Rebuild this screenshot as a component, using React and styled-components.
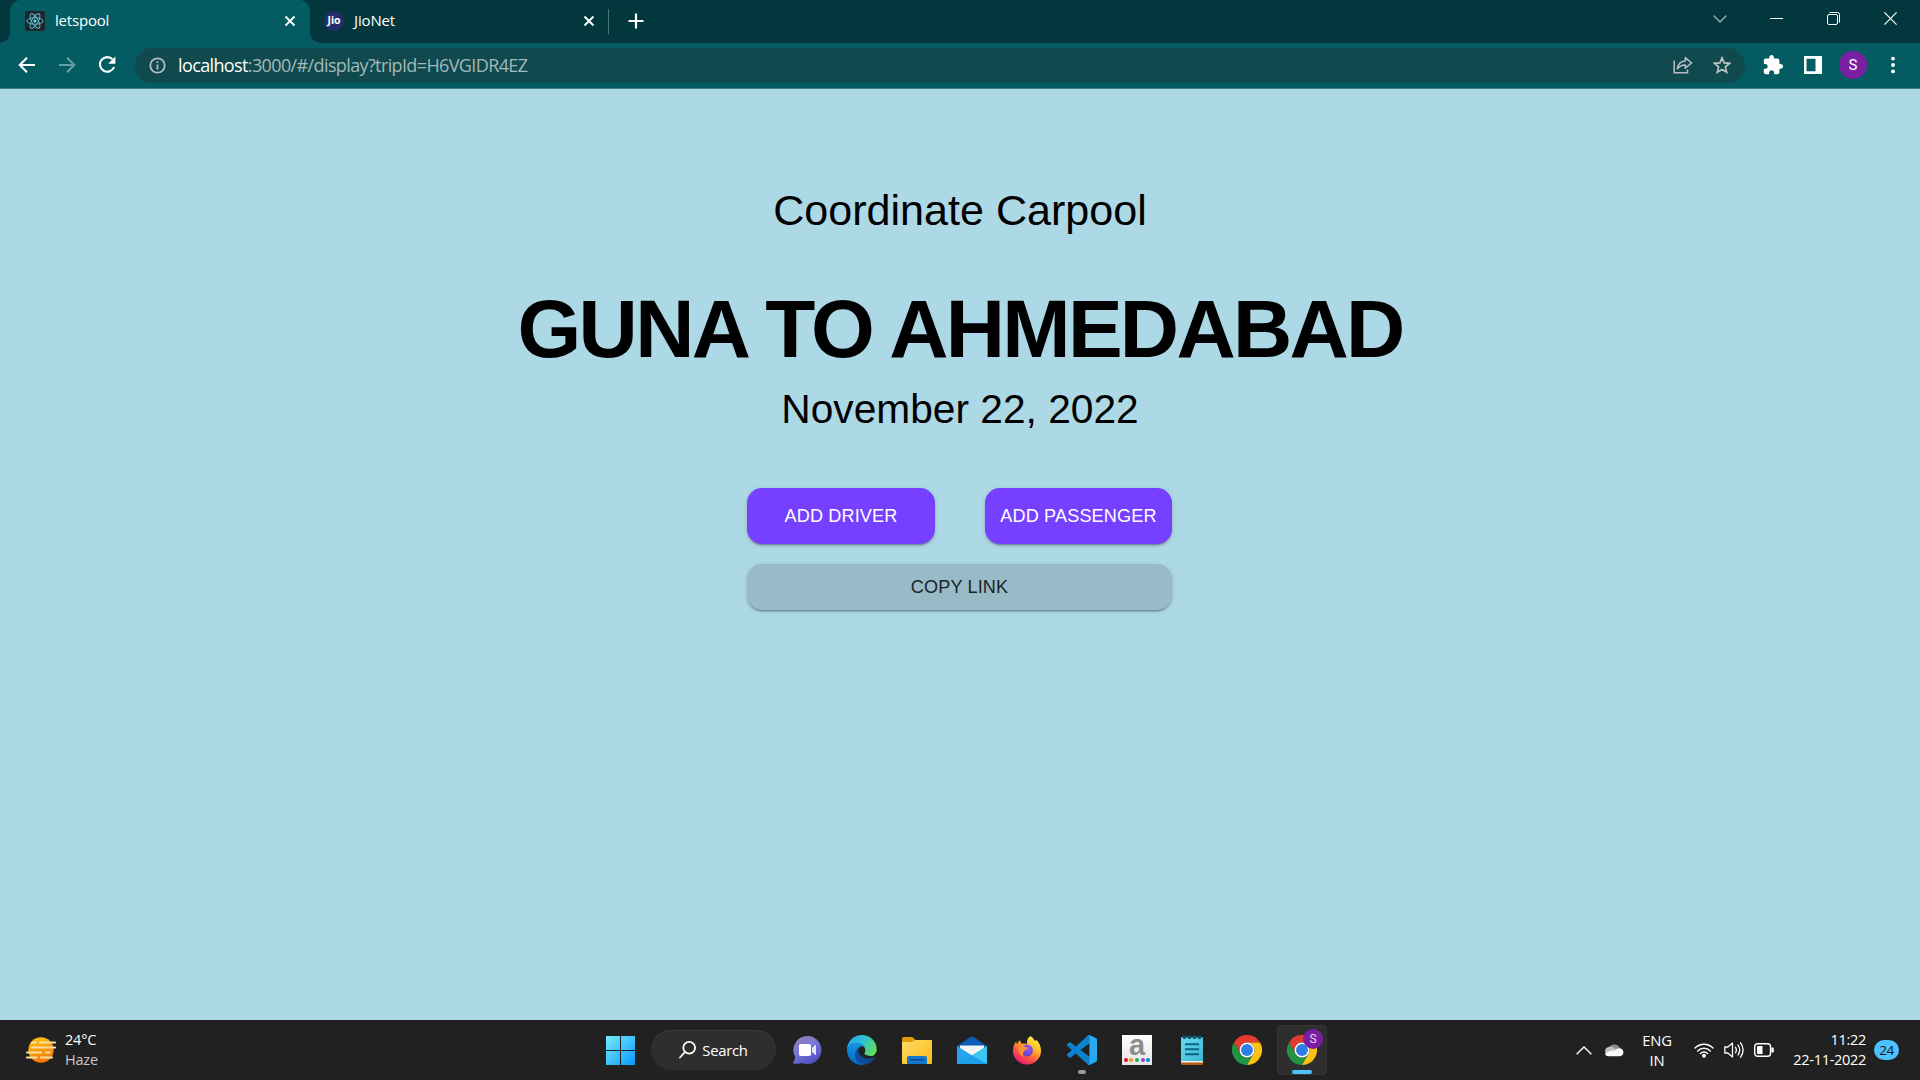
import React from "react";
import styled, { createGlobalStyle, css } from "styled-components";

const GlobalStyle = createGlobalStyle`
  * { box-sizing: border-box; }
  body { margin: 0; background: #add8e6; overflow: hidden; }
  button { border: 0; padding: 0; margin: 0; background: none; font: inherit; color: inherit; }
  svg { display: block; flex: none; }
`;

const uiFont = css`font-family: "Open Sans", "Noto Sans", sans-serif;`;

const Screen = styled.div`
  display: flex;
  flex-direction: column;
  width: 1920px;
  height: 1080px;
  overflow: hidden;
  background: #add8e6;
`;

/* ---------- browser ---------- */

const TabStrip = styled.header`
  ${uiFont}
  display: flex;
  flex: none;
  height: 43px;
  padding-left: 10px;
  background: #02383d;
  color: #fff;
`;

const Tab = styled.div`
  position: relative;
  display: flex;
  align-items: center;
  width: ${(p) => p.$width}px;
  padding: 0 14px 2px ${(p) => (p.$active ? 15 : 14)}px;
  font-size: 15px;
  letter-spacing: ${(p) => p.$track || 0}px;
  border-radius: 10px 10px 0 0;
  background: ${(p) => (p.$active ? "#045c62" : "transparent")};
  ${(p) =>
    p.$active &&
    css`
      &::before, &::after {
        content: "";
        position: absolute;
        bottom: 0;
        width: 10px;
        height: 10px;
      }
      &::before { left: -10px; background: radial-gradient(circle at 0 0, transparent 9.5px, #045c62 10px); }
      &::after { right: -10px; background: radial-gradient(circle at 100% 0, transparent 9.5px, #045c62 10px); }
    `}
`;

const TabTitle = styled.span`
  flex: 1;
  margin-left: 10px;
  line-height: 39px;
`;

const TabDivider = styled.i`
  width: 1px;
  height: 25px;
  margin: 9px 0 0 -1px;
  background: #4d7478;
`;

const NewTab = styled.button`
  display: grid;
  place-items: center;
  width: 54px;
  height: 42px;
`;

const WindowControls = styled.div`
  display: flex;
  height: 37px;
  margin-left: auto;
  padding-right: 1px;
`;

const WindowButton = styled.button`
  display: grid;
  place-items: center;
  width: 57px;
`;

const Toolbar = styled.div`
  ${uiFont}
  display: flex;
  flex: none;
  align-items: center;
  height: 46px;
  padding: 0 7px 1px 7px;
  background: #045c62;
  border-bottom: 1px solid #418185;
  color: #fff;
`;

const ToolButton = styled.button`
  display: grid;
  place-items: center;
  width: ${(p) => p.$w || 40}px;
  height: 40px;
`;

const AddressBar = styled.div`
  display: flex;
  flex: 1;
  align-items: center;
  height: 35px;
  margin: 0 8px 0 8px;
  padding: 0 3px 0 14px;
  border-radius: 18px;
  background: #10494e;
  color: #bcbfc1;
`;

const Url = styled.span`
  flex: 1;
  margin-left: 12px;
  font-size: 18px;
  line-height: 24px;
  letter-spacing: -0.62px;
  color: #a3b9bb;
  b { font-weight: 400; color: #fff; }
`;

const Avatar = styled.span`
  display: grid;
  place-items: center;
  width: 28px;
  height: 28px;
  border-radius: 50%;
  background: #7b1fa2;
  font: 15px/28px Roboto, sans-serif;
`;

/* ---------- page ---------- */

const Page = styled.main`
  display: flex;
  flex: 1;
  flex-direction: column;
  align-items: center;
  padding-top: 94px;
  background: #add8e6;
  color: #000;
  font-family: "Liberation Sans", Arial, sans-serif;
`;

const Subtitle = styled.h2`
  margin: 0;
  font-size: 43.1px;
  font-weight: 400;
  line-height: 54px;
`;

const Route = styled.h1`
  margin: 45px 0 0;
  font-size: 82px;
  font-weight: 700;
  line-height: 94px;
  letter-spacing: -2.7px;
`;

const TripDate = styled.p`
  margin: 9px 0 0;
  font-size: 40.7px;
  line-height: 48px;
`;

const Actions = styled.div`
  display: grid;
  grid-template-columns: 188px 187px;
  justify-content: space-between;
  row-gap: 20px;
  width: 425px;
  margin: 55px 1px 0 0;
`;

const Action = styled.button`
  height: ${(p) => (p.$wide ? 46 : 56)}px;
  grid-column: ${(p) => (p.$wide ? "1 / -1" : "auto")};
  border-radius: 15px;
  font-size: 18.1px;
  letter-spacing: 0.14px;
  white-space: nowrap;
  color: ${(p) => (p.$wide ? "#1c2326" : "#fff")};
  background: ${(p) => (p.$wide ? "#98bbc7" : "#7540ff")};
  box-shadow: 0 3px 1px -2px rgba(0, 0, 0, 0.2), 0 2px 2px 0 rgba(0, 0, 0, 0.14), 0 1px 5px 0 rgba(0, 0, 0, 0.12);
`;

/* ---------- taskbar ---------- */

const Taskbar = styled.footer`
  ${uiFont}
  display: grid;
  grid-template-columns: 1fr auto 1fr;
  flex: none;
  height: 60px;
  background: #212121;
  color: #fff;
`;

const Weather = styled.div`
  display: flex;
  align-items: center;
  gap: 9px;
  padding-left: 26px;
`;

const Lines = styled.div`
  padding-bottom: ${(p) => p.$lift || 0}px;
  font-size: ${(p) => p.$size || 14.5}px;
  line-height: 20px;
  letter-spacing: ${(p) => p.$track || 0}px;
  text-align: ${(p) => p.$align || "left"};
  white-space: nowrap;
  span { display: block; }
  span + span { color: ${(p) => p.$second || "#fff"}; }
`;

const Dock = styled.nav`
  display: flex;
  align-items: center;
  padding-left: 2px;
`;

const DockItem = styled.button`
  position: relative;
  display: grid;
  place-items: center;
  width: 50px;
  height: 50px;
  margin-right: ${(p) => (p.$last ? 0 : 5)}px;
  border-radius: 5px;
  background: ${(p) => (p.$active ? "#2e2e2e" : "transparent")};
  box-shadow: ${(p) => (p.$active ? "inset 0 0 0 1px #373737" : "none")};
`;

const Indicator = styled.i`
  position: absolute;
  bottom: 1px;
  left: 50%;
  width: ${(p) => (p.$on ? 20 : 8)}px;
  height: 4px;
  border-radius: 2px;
  transform: translateX(-50%);
  background: ${(p) => (p.$on ? "#4cc2ff" : "#9a9a9a")};
`;

const ProfileBadge = styled.span`
  position: absolute;
  top: 4px;
  right: 4px;
  width: 20px;
  height: 20px;
  border-radius: 50%;
  background: #7b1fa2;
  color: #e6cdf0;
  font: 12px/20px Roboto, sans-serif;
  text-align: center;
`;

const SearchPill = styled.button`
  display: flex;
  align-items: center;
  justify-content: center;
  gap: 6px;
  width: 125px;
  height: 40px;
  margin: 0 6px 0 1px;
  border-radius: 20px;
  background: #2e2e2e;
  box-shadow: inset 0 1px 0 #3a3a3a;
  font-size: 14.9px;
  letter-spacing: -0.3px;
`;

const LetterTile = styled.span`
  display: flex;
  flex-direction: column;
  align-items: center;
  width: 30px;
  height: 30px;
  background: linear-gradient(#fff, #e4e4e4);
  color: #8c8c8c;
  font: 700 29px/20px "Liberation Sans", Arial, sans-serif;
`;

const Dots = styled.span`
  display: flex;
  gap: 1.6px;
  margin-top: 3px;
  i { width: 4px; height: 4px; border-radius: 50%; }
`;

const Tray = styled.div`
  display: flex;
  align-items: center;
  justify-content: flex-end;
  padding-right: 21px;
`;

const Slot = styled.span`
  display: grid;
  place-items: center ${(p) => (p.$end ? "end" : "center")};
  width: ${(p) => p.$w}px;
`;

const Count = styled.span`
  width: 25px;
  height: 20px;
  margin-left: 8px;
  border-radius: 10px;
  background: #4cc2ff;
  color: #111;
  font-size: 13.5px;
  line-height: 21px;
  letter-spacing: -0.4px;
  text-align: center;
`;

/* ---------- drawings ---------- */

const ReactFavicon = () => (
  <svg width="20" height="20" viewBox="0 0 20 20">
    <rect width="20" height="20" rx="2" fill="#20272b" />
    <g fill="none" stroke="#61c5dd" strokeWidth="0.9">
      <ellipse cx="10" cy="10" rx="8.2" ry="3.2" />
      <ellipse cx="10" cy="10" rx="8.2" ry="3.2" transform="rotate(60 10 10)" />
      <ellipse cx="10" cy="10" rx="8.2" ry="3.2" transform="rotate(120 10 10)" />
    </g>
    <circle cx="10" cy="10" r="1.6" fill="#61dafb" />
  </svg>
);

const JioMark = styled.span`
  width: 20px;
  height: 20px;
  border-radius: 50%;
  background: #25306b;
  color: #fff;
  font: 700 10.5px/19px "Open Sans", sans-serif;
  letter-spacing: -0.1px;
  text-align: center;
`;

const CloseIcon = () => (
  <svg width="12" height="12" viewBox="0 0 12 12" stroke="#fff" strokeWidth="1.9">
    <path d="M1.5 1.5l9 9M10.5 1.5l-9 9" />
  </svg>
);

const Arrow = ({ back }) => (
  <svg width="18" height="18" viewBox="0 0 18 18" fill="none" stroke={back ? "#fff" : "#669fa2"} strokeWidth="2">
    <path d={back ? "M17 9H2M9 1.7L1.7 9L9 16.3" : "M1 9h15M9 1.7L16.3 9L9 16.3"} />
  </svg>
);

const Reload = () => (
  <svg width="18" height="18" viewBox="0 0 18 18">
    <path d="M14.6 3.4A7.3 7.3 0 1 0 16.1 11" fill="none" stroke="#fff" strokeWidth="2.1" />
    <path d="M17.4 0.6v7.2h-7.2z" fill="#fff" />
  </svg>
);

const Info = () => (
  <svg width="17" height="17" viewBox="0 0 17 17" fill="none" stroke="#b3bcbe" strokeWidth="1.8">
    <circle cx="8.5" cy="8.5" r="7.2" />
    <path d="M8.5 7.6v5M8.5 4.2v1.9" />
  </svg>
);

const Share = () => (
  <svg width="20" height="18" viewBox="0 0 20 18" fill="none" stroke="#b9bfc0" strokeWidth="1.5">
    <path d="M1.2 4.5v12.2h13.3v-3.2" />
    <path d="M4.3 12.7C5 8 7.6 5.2 12.3 4.9V1.6L18.6 7l-6.3 5.2V9C8.900 8.900 6.500 10.200 4.300 12.700z" strokeLinejoin="round" />
  </svg>
);

const Star = () => (
  <svg width="18" height="18" viewBox="0 0 18 18" fill="none" stroke="#bfc3c4" strokeWidth="1.7">
    <path d="M9 1.9l2.1 5 5.400.450-4.100 3.550 1.250 5.300L9 13.400l-4.650 2.800 1.250-5.300L1.500 7.350l5.400-.450z" />
  </svg>
);

const Puzzle = () => (
  <svg width="22" height="22" viewBox="0 0 24 24" fill="#fff">
    <path d="M20.500 11H19V7c0-1.100-.9-2-2-2h-4V3.500C13 2.120 11.880 1 10.500 1S8 2.120 8 3.500V5H4c-1.100 0-1.990.9-1.990 2v3.800H3.500c1.490 0 2.700 1.210 2.700 2.700s-1.210 2.700-2.700 2.700H2V20c0 1.100.9 2 2 2h3.800v-1.500c0-1.490 1.210-2.700 2.700-2.700 1.490 0 2.700 1.210 2.700 2.700V22H17c1.100 0 2-.9 2-2v-4h1.500c1.380 0 2.500-1.120 2.500-2.500S21.880 11 20.500 11z" />
  </svg>
);

const SidePanel = () => (
  <svg width="18" height="18" viewBox="0 0 18 18">
    <path fillRule="evenodd" d="M0 0h18v18H0zM2.500 2.800v12.400h9V2.800z" fill="#fff" />
  </svg>
);

const Kebab = () => (
  <svg width="4" height="18" viewBox="0 0 4 18" fill="#fff">
    <circle cx="2" cy="2.600" r="1.950" /><circle cx="2" cy="9" r="1.950" /><circle cx="2" cy="15.400" r="1.950" />
  </svg>
);

const Haze = () => (
  <svg width="30" height="26" viewBox="0 0 30 26">
    <defs>
      <linearGradient id="sun" x1="0.300" y1="0" x2="0.700" y2="1">
        <stop offset="0" stopColor="#fdc30d" /><stop offset="1" stopColor="#f4700b" />
      </linearGradient>
    </defs>
    <circle cx="15" cy="13" r="12.700" fill="url(#sun)" />
    <g stroke="#f7dfa4" strokeWidth="2.200" strokeLinecap="round">
      <path d="M6 5.500h4M14 5.500h15M6 10.500h23M1 15.500h14M20 15.500h4M1 20.500h9.500M15 20.500h11" />
    </g>
  </svg>
);

const WindowsLogo = () => (
  <svg width="29" height="29" viewBox="0 0 29 29">
    <defs>
      <linearGradient id="win" gradientUnits="userSpaceOnUse" x1="0" y1="0" x2="29" y2="29">
        <stop offset="0" stopColor="#75ecff" /><stop offset="1" stopColor="#0a98fb" />
      </linearGradient>
    </defs>
    <path fill="url(#win)" d="M0 0h14v14H0zM15 0h14v14H15zM0 15h14v14H0zM15 15h14v14H15z" />
  </svg>
);

const Magnifier = () => (
  <svg width="17" height="18" viewBox="0 0 17 18" fill="none" stroke="#fff" strokeWidth="1.800" strokeLinecap="round">
    <circle cx="10.200" cy="6.800" r="5.900" /><path d="M5.800 11.200L1 16.500" />
  </svg>
);

const Chat = () => (
  <svg width="30" height="30" viewBox="0 0 30 30">
    <defs>
      <linearGradient id="chat" x1="0.100" y1="0" x2="0.700" y2="1">
        <stop offset="0" stopColor="#a37bb8" /><stop offset="0.500" stopColor="#7377d5" /><stop offset="1" stopColor="#4c4cc0" />
      </linearGradient>
    </defs>
    <path d="M15.500 1A14 14 0 1 1 10 27.900Q6.500 28.700 1 28.800C1.300 26.500 3.200 24 3.300 22A14 14 0 0 1 15.500 1z" fill="url(#chat)" />
    <rect x="7" y="9" width="12" height="12" rx="1.800" fill="#fff" />
    <path d="M20 13l3-2.800c.6-.5 1-.2 1 .4v8.800c0 .6-.4.900-1 .4L20 17z" fill="#e3e4fa" />
  </svg>
);

const Edge = () => (
  <svg width="30" height="30" viewBox="0 0 256 256">
    <defs>
      <linearGradient id="eTop" x1="0" y1="0.300" x2="1" y2="0.700">
        <stop offset="0" stopColor="#24a9e8" /><stop offset="0.500" stopColor="#30c3cc" /><stop offset="1" stopColor="#66e052" />
      </linearGradient>
      <linearGradient id="eLeft" x1="0.500" y1="0" x2="0.400" y2="1">
        <stop offset="0" stopColor="#149ae5" /><stop offset="1" stopColor="#0667c0" />
      </linearGradient>
      <linearGradient id="eLow" x1="0" y1="0.500" x2="1" y2="0.500">
        <stop offset="0" stopColor="#104ea3" /><stop offset="1" stopColor="#0b458c" />
      </linearGradient>
    </defs>
    <path d="M231 190a94 94 0 0 1-10 5 101 101 0 0 1-36 6c-47 0-89-32-89-74a31 31 0 0 1 17-27c-43 2-54 46-54 72 0 74 68 81 83 81a118 118 0 0 0 25-4l1 0a128 128 0 0 0 67-53 4 4 0 0 0-4-6z" fill="url(#eLow)" />
    <path d="M106 241a79 79 0 0 1-23-21 81 81 0 0 1 30-120c3-1 8-4 15-4a32 32 0 0 1 26 13c-9-50-54-62-78-62C38 47 0 80 0 127a128 128 0 0 0 12 56 128 128 0 0 0 156 66 76 76 0 0 1-62-8z" fill="url(#eLeft)" />
    <path d="M152 149c-1 1-4 3-4 7 0 3 2 7 7 10 22 15 63 13 63 13a70 70 0 0 0 36-51C256 49 190 0 128 0 50 0 1 58 0 128c.500-36 36-65 77-65 4 0 24 0 42 10 16 8 24 18 30 29 6 10 7 24 7 29 0 6-1 12-4 18z" fill="url(#eTop)" />
  </svg>
);

const Folder = () => (
  <svg width="30" height="28" viewBox="0 0 30 28">
    <defs>
      <linearGradient id="fold" x1="0" y1="0" x2="1" y2="1">
        <stop offset="0" stopColor="#ffdc69" /><stop offset="1" stopColor="#fbb915" />
      </linearGradient>
    </defs>
    <path d="M0 2.500Q0 1 1.500 1H9.500Q10.500 1 11.300 1.700L13.500 4H28.500Q30 4 30 5.500V9H0z" fill="#df9b08" />
    <path d="M0 7Q0 6 1 6H9.500Q10.500 6 11.300 5.300L13 4H29Q30 4 30 5V27Q30 28 29 28H1Q0 28 0 27z" fill="url(#fold)" />
    <path d="M5 28V22Q5 20 7 20H23Q25 20 25 22V28z" fill="#1479ca" />
    <path d="M8.500 23.700h13" stroke="#0c4b8e" strokeWidth="1.500" strokeLinecap="round" />
  </svg>
);

const Mail = () => (
  <svg width="30" height="30" viewBox="0 0 30 30">
    <path d="M0 11L13.500 2Q15 1.200 16.500 2L30 11V14H0z" fill="#0c5eb5" />
    <path d="M3 10.500h24v6L15 25 3 16.500z" fill="#f2f4f6" />
    <path d="M0 11l15 9.500L30 11v17q0 1-1 1H1q-1 0-1-1z" fill="#22a5ee" />
    <path d="M15 20.500L30 11v17q0 1-1 1z" fill="#3bc7f4" />
    <path d="M15 20.500L30 28.500q-.3.500-1 .5H1q-1 0-1-1z" fill="#209eea" />
  </svg>
);

const Firefox = () => (
  <svg width="30" height="30" viewBox="0 0 30 30">
    <defs>
      <linearGradient id="fox" x1="0.800" y1="0.050" x2="0.250" y2="0.950">
        <stop offset="0" stopColor="#fff14a" /><stop offset="0.350" stopColor="#ffb52c" /><stop offset="0.650" stopColor="#ff603b" /><stop offset="1" stopColor="#eb1870" />
      </linearGradient>
      <radialGradient id="globe" cx="0.600" cy="0.300" r="0.800">
        <stop offset="0" stopColor="#9c57ec" /><stop offset="1" stopColor="#5144c5" />
      </radialGradient>
    </defs>
    <path d="M18.500 1C20.500 2 21.500 4 22.500 5.500 23.500 6.300 24.500 5.500 24 4.500 27.500 8 29.200 12 29 16A14 13.500 0 0 1 1 16C1 12 2 8.500 4.300 6.500 4.300 7.500 4.700 8.500 5.300 9.200 7 5 8.500 5.500 8.500 5.500 8.200 7.200 9 8.200 10 8.700 12 8.500 14 8.500 15 9.500 14.500 6 15.500 2.800 18.500 1z" fill="url(#fox)" />
    <circle cx="15" cy="15.500" r="5.900" fill="url(#globe)" />
    <path d="M6 11.500C9 10 12 11 14.500 12.500 16 12.500 16 14 14.500 14.500 12.500 15 12 15.500 11.800 17.300 10.600 18.500 10.500 20 12 21.800 7.500 20.500 6 16 6 11.500z" fill="#ff9134" />
  </svg>
);

const VsCode = () => (
  <svg width="30" height="30" viewBox="0 0 24 24">
    <path fill="#0b84cf" d="M23.150 2.587L18.210.210a1.494 1.494 0 0 0-1.705.290l-9.460 8.630-4.120-3.128a.999.999 0 0 0-1.276.057L.327 7.261A1 1 0 0 0 .326 8.740L3.899 12 .326 15.260a1 1 0 0 0 .001 1.479L1.650 17.940a.999.999 0 0 0 1.276.057l4.120-3.128 9.460 8.630a1.492 1.492 0 0 0 1.704.290l4.942-2.377A1.500 1.500 0 0 0 24 20.060V3.939a1.500 1.500 0 0 0-.850-1.352zm-5.146 14.861L10.826 12l7.178-5.448v10.896z" />
    <path fill="#2aa8f2" d="M18.210.210l4.940 2.377A1.500 1.500 0 0 1 24 3.940v16.120a1.500 1.500 0 0 1-.850 1.350l-4.940 2.380a1.500 1.500 0 0 1-1.700-.290c.600.500 1.500.1 1.500-.7V1.200c0-.8-.900-1.200-1.500-.7a1.500 1.500 0 0 1 1.700-.290z" />
  </svg>
);

const Notepad = () => (
  <svg width="22" height="30" viewBox="0 0 22 30">
    <defs>
      <linearGradient id="note" x1="0" y1="0" x2="1" y2="1">
        <stop offset="0" stopColor="#6fdcf0" /><stop offset="1" stopColor="#39b4d3" />
      </linearGradient>
    </defs>
    <path d="M0 25h22v4q0 1-1 1H1q-1 0-1-1z" fill="#b45c12" />
    <path d="M0 24h22v3.500H0z" fill="#f0f0f0" />
    <path d="M1 2h20q1 0 1 1v23H0V3q0-1 1-1z" fill="url(#note)" />
    <g fill="#0a566f"><circle cx="3.500" cy="2.200" r="1.900" /><circle cx="8.500" cy="2.200" r="1.900" /><circle cx="13.500" cy="2.200" r="1.900" /><circle cx="18.500" cy="2.200" r="1.900" /></g>
    <path d="M4 9.200h14M4 14.200h14M4 19.200h14" stroke="#0b6482" strokeWidth="2" />
  </svg>
);

const Chrome = () => (
  <svg width="30" height="30" viewBox="0 0 48 48">
    <path fill="#e33b2e" d="M24 12H44.800A24 24 0 0 0 3.200 12L13.600 30A12 12 0 0 1 24 12z" />
    <path fill="#229342" d="M13.600 30L3.200 12A24 24 0 0 0 24 48L34.400 30A12 12 0 0 1 13.600 30z" />
    <path fill="#fbc116" d="M34.400 30L24 48A24 24 0 0 0 44.800 12H24A12 12 0 0 1 34.400 30z" />
    <circle cx="24" cy="24" r="12" fill="#fff" />
    <circle cx="24" cy="24" r="9.500" fill="#2f7bea" />
  </svg>
);

const Cloud = () => (
  <svg width="20" height="14" viewBox="0 0 20 14">
    <path d="M5.500 4A6 6 0 0 1 16 5.500L9 8.500z" fill="#8d8d8d" />
    <path d="M4.500 12.500A4.400 4.400 0 0 1 4.200 4 5.500 5.500 0 0 1 9.500 4.500L14 8l-6 5z" fill="#c0c0c0" />
    <path d="M1 11.500C3 8 8 7.500 11 7.200 13 5.500 15.500 5 16.500 5.500A4 4 0 0 1 16 13.300H4.500Q2 13.300 1 11.500z" fill="#fafafa" />
  </svg>
);

const Wifi = () => (
  <svg width="20" height="16" viewBox="0 0 20 16" fill="none" stroke="#fff" strokeWidth="1.400" strokeLinecap="round">
    <path d="M1 6A12.700 12.700 0 0 1 19 6M3.700 8.900A8.900 8.900 0 0 1 16.300 8.900M6.400 11.500A5.100 5.100 0 0 1 13.600 11.500" />
    <circle cx="10" cy="13.700" r="1.300" fill="#fff" stroke="#fff" />
  </svg>
);

const Speaker = () => (
  <svg width="20" height="18" viewBox="0 0 20 18" fill="none" stroke="#fff" strokeWidth="1.300" strokeLinecap="round" strokeLinejoin="round">
    <path d="M.8 6h3L8.500 2v14L3.800 12h-3z" />
    <path d="M11.500 6.300q1.800 2.700 0 5.400M14 4q3.400 5 0 10M16.600 1.800q5 7.200 0 14.400" />
  </svg>
);

const Battery = () => (
  <svg width="20" height="14" viewBox="0 0 20 14">
    <rect x=".7" y=".7" width="15.800" height="12.600" rx="2.800" fill="none" stroke="#fff" strokeWidth="1.400" />
    <path d="M3 4q0-1 1-1h4.500v8H4q-1 0-1-1z" fill="#fff" />
    <path d="M17.300 4.500h1.200q1.300 0 1.300 1.300v2.400q0 1.300-1.300 1.300h-1.200z" fill="#fff" />
  </svg>
);

const dock = [
  { name: "chat", icon: <Chat /> },
  { name: "edge", icon: <Edge /> },
  { name: "files", icon: <Folder /> },
  { name: "mail", icon: <Mail /> },
  { name: "firefox", icon: <Firefox /> },
  { name: "code", icon: <VsCode />, running: true },
  {
    name: "shop",
    icon: (
      <LetterTile>
        a
        <Dots>
          {["#e8101c", "#f7941e", "#26a85a", "#8e3fd1", "#0b84d8"].map((c) => (
            <i key={c} style={{ background: c }} />
          ))}
        </Dots>
      </LetterTile>
    ),
  },
  { name: "notepad", icon: <Notepad /> },
  { name: "chrome", icon: <Chrome /> },
  { name: "chrome-profile", icon: <Chrome />, active: true },
];

export default function App() {
  return (
    <Screen>
      <GlobalStyle />
      <TabStrip>
        <Tab $active $width={300} $track={-0.2}>
          <ReactFavicon />
          <TabTitle>letspool</TabTitle>
          <CloseIcon />
        </Tab>
        <Tab $width={299} $track={-0.15}>
          <JioMark>Jio</JioMark>
          <TabTitle>JioNet</TabTitle>
          <CloseIcon />
        </Tab>
        <TabDivider />
        <NewTab>
          <svg width="16" height="16" viewBox="0 0 16 16" stroke="#fff" strokeWidth="2.200"><path d="M8 .5v15M.5 8h15" /></svg>
        </NewTab>
        <WindowControls>
          <WindowButton>
            <svg width="14" height="8" viewBox="0 0 14 8" fill="none" stroke="#b9c9ca" strokeWidth="1.200"><path d="M.7.7L7 7L13.300.7" /></svg>
          </WindowButton>
          <WindowButton>
            <svg width="13" height="1" viewBox="0 0 13 1"><path d="M0 0h13v1H0z" fill="#fff" /></svg>
          </WindowButton>
          <WindowButton>
            <svg width="13" height="13" viewBox="0 0 13 13" fill="none" stroke="#fff"><rect x=".5" y="2.500" width="10" height="10" rx="1.500" /><path d="M2.500.5H10.500Q12.500.5 12.500 2.500V10.500" /></svg>
          </WindowButton>
          <WindowButton>
            <svg width="13" height="13" viewBox="0 0 13 13" stroke="#fff" strokeWidth="1.200"><path d="M.4.4l12.200 12.200M12.600.4L.4 12.600" /></svg>
          </WindowButton>
        </WindowControls>
      </TabStrip>

      <Toolbar>
        <ToolButton><Arrow back /></ToolButton>
        <ToolButton><Arrow /></ToolButton>
        <ToolButton><Reload /></ToolButton>
        <AddressBar>
          <Info />
          <Url><b>localhost</b>:3000/#/display?tripId=H6VGIDR4EZ</Url>
          <ToolButton $w={38}><Share /></ToolButton>
          <ToolButton><Star /></ToolButton>
        </AddressBar>
        <ToolButton><Puzzle /></ToolButton>
        <ToolButton><SidePanel /></ToolButton>
        <ToolButton><Avatar>S</Avatar></ToolButton>
        <ToolButton><Kebab /></ToolButton>
      </Toolbar>

      <Page>
        <Subtitle>Coordinate Carpool</Subtitle>
        <Route>GUNA TO AHMEDABAD</Route>
        <TripDate>November 22, 2022</TripDate>
        <Actions>
          <Action>ADD DRIVER</Action>
          <Action>ADD PASSENGER</Action>
          <Action $wide>COPY LINK</Action>
        </Actions>
      </Page>

      <Taskbar>
        <Weather>
          <Haze />
          <Lines $second="#c8c8c8" $track={-0.2}><span>24°C</span><span>Haze</span></Lines>
        </Weather>
        <Dock>
          <DockItem><WindowsLogo /></DockItem>
          <SearchPill><Magnifier />Search</SearchPill>
          {dock.map((d) => (
            <DockItem key={d.name} $active={d.active} $last={d.active}>
              {d.icon}
              {d.active && <ProfileBadge>S</ProfileBadge>}
              {(d.active || d.running) && <Indicator $on={d.active} />}
            </DockItem>
          ))}
        </Dock>
        <Tray>
          <Slot $w={36}>
            <svg width="16" height="9" viewBox="0 0 16 9" fill="none" stroke="#fff" strokeWidth="1.400"><path d="M.6 8.300L8 1l7.400 7.300" /></svg>
          </Slot>
          <Slot $w={24}><Cloud /></Slot>
          <Slot $w={62}><Lines $align="center" $size={14.8} $track={-0.2}><span>ENG</span><span>IN</span></Lines></Slot>
          <Slot $w={31}><Wifi /></Slot>
          <Slot $w={30}><Speaker /></Slot>
          <Slot $w={30}><Battery /></Slot>
          <Slot $w={87} $end><Lines $align="right" $track={-0.3} $lift={1}><span>11:22</span><span>22-11-2022</span></Lines></Slot>
          <Count>24</Count>
        </Tray>
      </Taskbar>
    </Screen>
  );
}
